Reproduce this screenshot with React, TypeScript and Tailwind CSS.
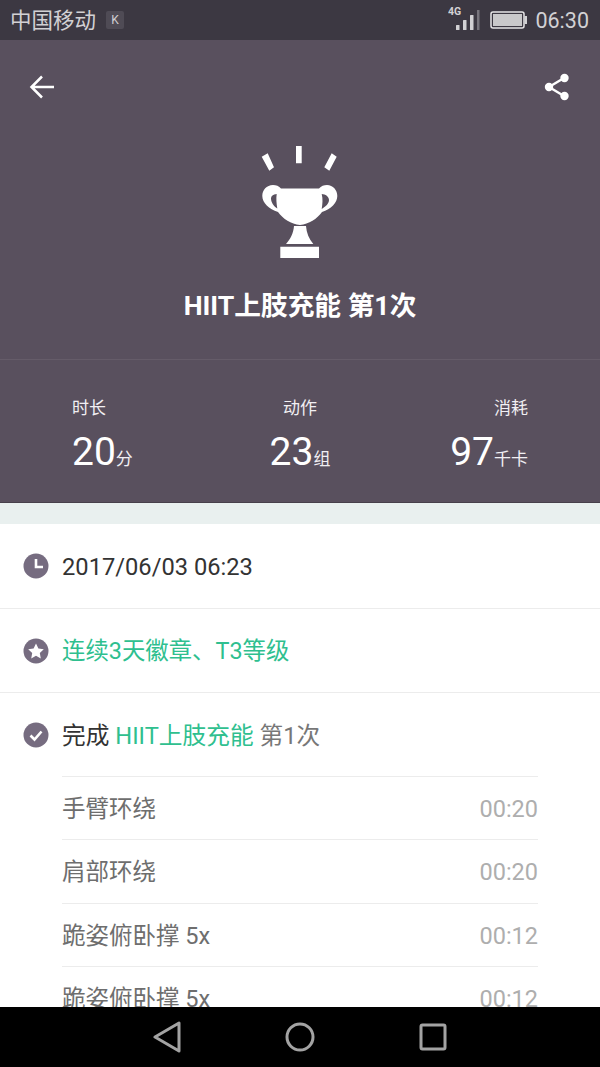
const sans = "font-['Roboto','Noto_Sans_CJK_SC',sans-serif]";

const steps = [
  { name: "手臂环绕", time: "00:20" },
  { name: "肩部环绕", time: "00:20" },
  { name: "跪姿俯卧撑 5x", time: "00:12" },
  { name: "跪姿俯卧撑 5x", time: "00:12" },
];

function Stat({ label, value, unit, align }: { label: string; value: string; unit: string; align: string }) {
  return (
    <div className={`flex flex-col ${align}`}>
      <div className="text-[17px] leading-[22px] text-[#f1eff3]">{label}</div>
      <div className="mt-[11px] flex items-baseline leading-[44px]">
        <span className="text-[39px] text-white">{value}</span>
        <span className="text-[17px] text-[#f1eff3]">{unit}</span>
      </div>
    </div>
  );
}

function Badge({ children }: { children: React.ReactNode }) {
  return (
    <svg width="26" height="26" viewBox="0 0 26 26" className="shrink-0">
      <circle cx="13" cy="13" r="12.5" fill="#766c80" />
      {children}
    </svg>
  );
}

export default function App() {
  return (
    <div className={`flex h-[1067px] w-[600px] flex-col overflow-hidden bg-white ${sans}`}>
      {/* status bar */}
      <div className="flex h-10 shrink-0 items-center bg-[#3c3842] pl-[10px] pr-[11px] text-[#d2d1d4]">
        <span className="pt-[2px] text-[21.500px]">中国移动</span>
        <span className="ml-[10px] flex h-[18px] w-[18px] items-center justify-center rounded-[2px] bg-[#4f4b55] text-[12px] text-[#cfced2]">K</span>
        <div className="ml-auto flex items-center">
          <svg width="32" height="30" viewBox="0 0 32 30" fill="#d2d1d4">
            <text x="0" y="10" fontSize="10.500" fontWeight="700">4G</text>
            <rect x="8" y="20" width="3.500" height="5" rx="0.500" />
            <rect x="15" y="15" width="3.500" height="10" rx="0.500" />
            <rect x="22" y="10" width="3.500" height="15" rx="0.500" />
            <rect x="29" y="5" width="2.500" height="20" fill="#77747c" />
          </svg>
          <svg width="37" height="18" viewBox="0 0 37 18" className="ml-[10px]">
            <rect x="1" y="1" width="33" height="16" rx="2" fill="none" stroke="#e6e5e7" strokeWidth="1.500" />
            <rect x="3" y="3" width="29" height="12" fill="#c9c8ca" />
            <rect x="34.500" y="5" width="2.500" height="8" fill="#d2d1d4" />
          </svg>
          <span className="ml-[8px] pt-[3px] text-[21.500px]">06:30</span>
        </div>
      </div>

      {/* header */}
      <div className="flex h-[463px] shrink-0 flex-col border-b border-[#47404b] bg-[#59505e]">
        <div className="flex h-[320px] shrink-0 flex-col border-b border-[#655c69]">
          <div className="flex items-center justify-between pl-[29px] pr-[30px] pt-[33px]">
            <svg width="25" height="24" viewBox="0 0 25 24" fill="none" stroke="white" strokeWidth="2.500">
              <path d="M25 12H3M13 1.500 2.500 12 13 22.500" />
            </svg>
            <svg width="26" height="28" viewBox="0 0 26 28" fill="white" stroke="white" strokeWidth="2.400">
              <path d="M20 5 5 14l15 9" fill="none" />
              <circle cx="20.500" cy="5" r="3" />
              <circle cx="5" cy="14" r="3" />
              <circle cx="20.500" cy="23" r="3" />
            </svg>
          </div>
          <svg width="80" height="112" viewBox="0 0 80 112" className="mx-auto mt-[45px] shrink-0" fill="white">
            <path d="M36 0h5.700v17.300H36zM1.700 10.700l6-3.400L14 21.300l-4.700 3.400zM71.700 7.300l5 3.400-7.400 14-5-3.400z" />
            <path
              fillRule="evenodd"
              d="M13 39C6.500 39 2.300 44 2.300 50c0 7 6.700 13 15.700 16 5 7 13 12 22 13 9-1 17-6 22-13 9-3 15.300-9 15.300-16 0-6-4.300-11-10.300-11-3 0-6 1-8 3.500H21C19 40 16 39 13 39zM16.700 48c-3.800.3-5.700 2-5.700 4.500 0 3.500 2.500 7.500 6.300 10-.8-5-1.300-10-.6-14.500zM61.700 48c3.800.3 7.300 2.500 7.300 6 0 3.500-3.300 6.500-7.300 9 .8-5 1.300-10 0-15z"
            />
            <path d="M34 80h12c.5 7 3 13 7.300 18H26c4.500-5 7.500-11 8-18z" />
            <path d="M20.300 100.700H59V112H20.300z" />
          </svg>
          <h1 className="mt-[31px] text-center text-[26.700px] font-bold leading-[34px] text-white">HIIT上肢充能 第1次</h1>
        </div>
        <div className="grid grid-cols-3 pl-[72px] pr-[72px] pt-[37px]">
          <Stat label="时长" value="20" unit="分" align="items-start" />
          <Stat label="动作" value="23" unit="组" align="items-center" />
          <Stat label="消耗" value="97" unit="千卡" align="items-end" />
        </div>
      </div>

      <div className="h-[21px] shrink-0 bg-[#e9f0ef]" />

      {/* details */}
      <div className="min-h-0 flex-1 overflow-hidden">
        <div className="flex h-[85px] items-center gap-[13px] border-b border-[#ececec] pl-[23px] text-[23.700px] text-[#333]">
          <Badge>
            <path d="M13 6v8h7" fill="none" stroke="white" strokeWidth="2.600" />
          </Badge>
          <span className="pt-[3px]">2017/06/03 06:23</span>
        </div>
        <div className="flex h-[84px] items-center gap-[13px] border-b border-[#ececec] pl-[23px] text-[23.400px] text-[#2fbf8f]">
          <Badge>
            <path d="m13 5.500 2.400 5 5.400.7-4 3.800 1 5.400-4.800-2.600-4.800 2.600 1-5.400-4-3.800 5.400-.7z" fill="white" />
          </Badge>
          <span className="pt-[3px]">连续3天徽章、T3等级</span>
        </div>
        <div className="flex h-[84px] items-center gap-[13px] pl-[23px] text-[23.700px] text-[#333]">
          <Badge>
            <path d="m7.500 13.500 4 4 7-8" fill="none" stroke="white" strokeWidth="2.600" />
          </Badge>
          <span className="pt-[3px]">
            完成 <span className="text-[#2fbf8f]">HIIT上肢充能</span> <span className="text-[#777]">第1次</span>
          </span>
        </div>
        <div className="-mt-px ml-[62px] mr-[62px]">
          {steps.map((s, i) => (
            <div key={i} className="flex h-[63.400px] items-center justify-between border-t border-[#ececec] pt-[3px] text-[23.500px]">
              <span className="text-[#6e6e6e]">{s.name}</span>
              <span className="text-[#aeaeae]">{s.time}</span>
            </div>
          ))}
        </div>
      </div>

      {/* nav bar */}
      <div className="flex h-[60px] shrink-0 items-center bg-black">
        <div className="flex w-full items-center justify-between pl-[153px] pr-[153px]">
          <svg width="28" height="32" viewBox="0 0 28 32" fill="none" stroke="#a3a3a3" strokeWidth="3" strokeLinejoin="round">
            <path d="M26 2v28L2 16z" />
          </svg>
          <svg width="30" height="30" viewBox="0 0 30 30" fill="none" stroke="#a3a3a3" strokeWidth="3">
            <circle cx="15" cy="15" r="13" />
          </svg>
          <svg width="28" height="28" viewBox="0 0 28 28" fill="none" stroke="#a3a3a3" strokeWidth="3" strokeLinejoin="round">
            <rect x="2" y="2" width="24" height="24" rx="1.500" />
          </svg>
        </div>
      </div>
    </div>
  );
}
